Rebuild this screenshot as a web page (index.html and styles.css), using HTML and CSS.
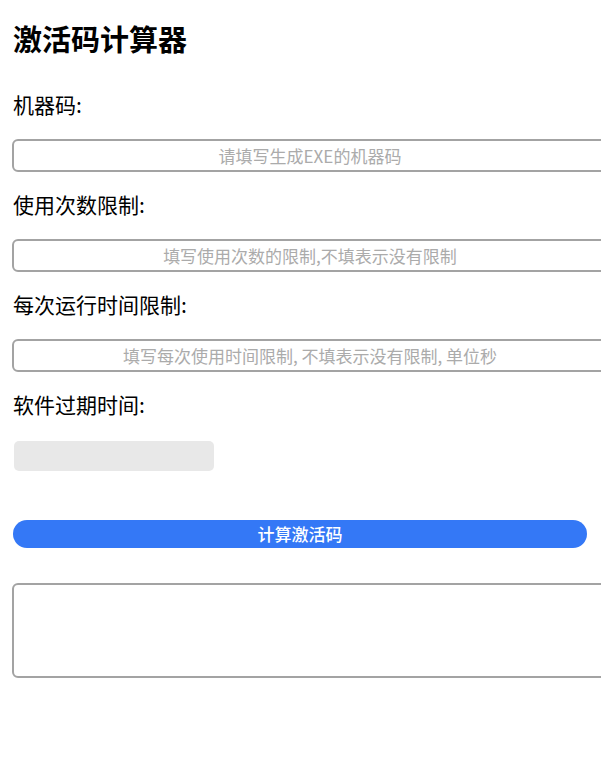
FILE: index.html
```html
<!DOCTYPE html>
<html lang="zh-CN">
<head>
<meta charset="utf-8">
<title>激活码计算器</title>
<link rel="stylesheet" href="styles.css">
</head>
<body>
<main class="page">
  <h1 class="title">激活码计算器</h1>

  <label class="label" for="machine">机器码:</label>
  <input class="field" id="machine" type="text" placeholder="请填写生成EXE的机器码">

  <label class="label" for="count">使用次数限制:</label>
  <input class="field" id="count" type="text" placeholder="填写使用次数的限制,不填表示没有限制">

  <label class="label" for="runtime">每次运行时间限制:</label>
  <input class="field" id="runtime" type="text" placeholder="填写每次使用时间限制, 不填表示没有限制, 单位秒">

  <label class="label" for="expire">软件过期时间:</label>
  <div class="date-field" id="expire"></div>

  <button class="calc-btn" type="button">计算激活码</button>

  <textarea class="result"></textarea>
</main>
</body>
</html>
```

FILE: styles.css
```css
html, body {
  margin: 0;
  padding: 0;
  background: #ffffff;
  overflow-x: hidden;
}

body {
  font-family: "Noto Sans CJK SC", "Noto Sans", sans-serif;
  color: #000;
}

.page {
  display: flex;
  flex-direction: column;
  align-items: flex-start;
  padding: 21px 12px 40px 12px;
}

.title {
  margin: 0;
  font-size: 29px;
  line-height: 34px;
  font-weight: 700;
  margin-left: 1px;
}

.label {
  display: block;
  font-size: 21px;
  line-height: 30px;
  margin-left: 1px;
}

.title + .label {
  margin-top: 34px;
}

.field {
  box-sizing: border-box;
  width: 596px;
  height: 33px;
  margin: 20px 0 17px 0;
  padding: 0 8px;
  border: 2px solid #a3a3a3;
  border-radius: 6px;
  background: #fff;
  font-family: inherit;
  font-size: 17px;
  text-align: center;
  outline: none;
}

.field::placeholder {
  color: #ababab;
}

.date-field {
  width: 200px;
  height: 30px;
  margin: 22px 0 0 2px;
  border-radius: 5px;
  background: #e8e8e8;
}

.calc-btn {
  box-sizing: border-box;
  width: 574px;
  height: 28px;
  margin: 49px 0 0 1px;
  padding: 0;
  border: none;
  border-radius: 14px;
  background: #3478f6;
  color: #fff;
  font-family: inherit;
  font-size: 17px;
  font-weight: 500;
  line-height: 28px;
}

.result {
  box-sizing: border-box;
  width: 596px;
  height: 95px;
  margin-top: 35px;
  border: 2px solid #a3a3a3;
  border-radius: 6px;
  resize: none;
  background: #fff;
  outline: none;
}
```
